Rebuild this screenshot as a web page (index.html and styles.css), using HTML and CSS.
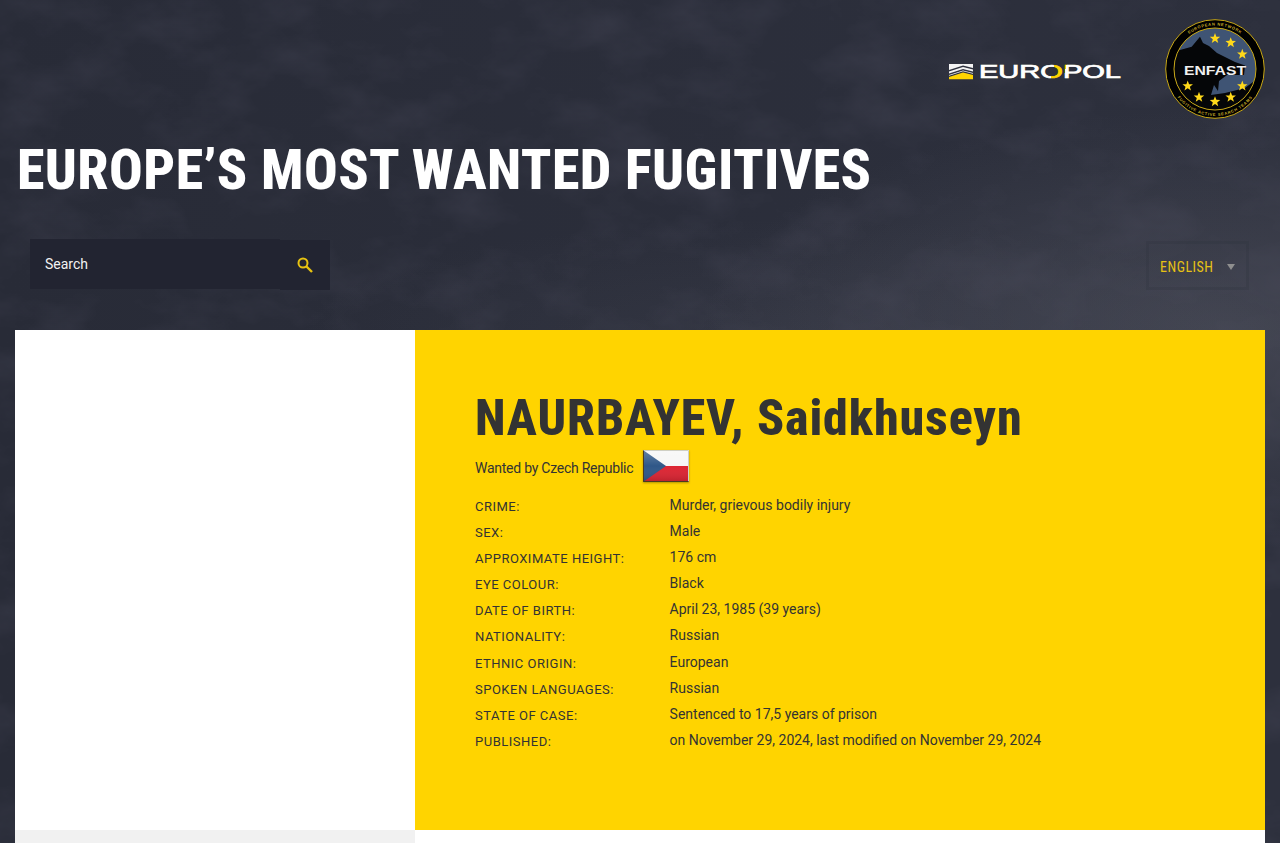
FILE: index.html
```html
<!DOCTYPE html>
<html>
<head>
  <title>Europe's Most Wanted Fugitives</title>
  <link rel="stylesheet" href="styles.css">
</head>
<body>
  <svg class="bg-texture" width="1280" height="843">
    <filter id="grain">
      <feTurbulence type="fractalNoise" baseFrequency="0.012 0.02" numOctaves="5" seed="7"></feTurbulence>
      <feColorMatrix type="matrix" values="0 0 0 0 0.08  0 0 0 0 0.08  0 0 0 0 0.12  0.6 0 0 0 -0.26"></feColorMatrix>
    </filter>
    <rect width="1280" height="843" filter="url(#grain)"></rect>
  </svg>

  <header class="site-header">
    <div class="logos">
      <svg class="europol-logo" viewBox="0 0 174 18" width="174" height="18">
        <defs>
          <linearGradient id="oFill" gradientUnits="userSpaceOnUse" x1="31" y1="-20" x2="174" y2="20">
            <stop offset="0.53" stop-color="#fff"></stop>
            <stop offset="0.53" stop-color="#ffd400"></stop>
            <stop offset="0.61" stop-color="#ffd400"></stop>
            <stop offset="0.61" stop-color="#fff"></stop>
          </linearGradient>
        </defs>
        <path d="M1 2 H25 V6 L15 3.500 L1 8Z M1 9.500 L15 5 L25 7.500 V9.500 L15 7 L1 11.500Z M1 13 L15 8.500 L25 11 V11.800 L15 9.300 L1 13.800Z" fill="#f4f4f4"></path>
        <path d="M1 15 L15 10.500 L25 13 V17.300 H1Z" fill="#ffd400"></path>
        <text class="europol-word" x="31" y="16.300" textLength="142" lengthAdjust="spacingAndGlyphs" fill="url(#oFill)" stroke="url(#oFill)" stroke-width="0.7">EUROPOL</text>
      </svg>
      <svg class="enfast-logo" viewBox="0 0 100 100" width="100" height="100">
        <defs>
          <path id="arcTop" d="M6.500 50 A43.500 43.500 0 0 1 93.500 50"></path>
          <path id="arcBottom" d="M3 50 A47 47 0 0 0 97 50"></path>
          <path id="star" d="M0 -5.500 L1.360 -1.860 L5.240 -1.700 L2.190 0.710 L3.240 4.460 L0 2.300 L-3.240 4.460 L-2.190 0.710 L-5.240 -1.700 L-1.360 -1.860Z"></path>
          <clipPath id="innerDisc"><circle cx="50" cy="50" r="41"></circle></clipPath>
        </defs>
        <circle cx="50" cy="50" r="49.300" fill="#000" stroke="#c9a816" stroke-width="1"></circle>
        <circle cx="50" cy="50" r="41" fill="#3f5474"></circle>
        <path clip-path="url(#innerDisc)" d="M35 17.700 L38 24 L44 27 L52 34 L70 43 L80 46.500 L79 56 L62 56 L54 62 L53 72 L49 66 L46 76 L60 74 L80 69 L92 60 V100 H8 V30 L15 31 L26.700 27.700Z" fill="#050608"></path>
        <circle cx="50" cy="50" r="41" fill="none" stroke="#c9a816" stroke-width="1"></circle>
        <text class="enfast-word" x="50" y="56" textLength="62" lengthAdjust="spacingAndGlyphs">ENFAST</text>
        <text class="enfast-ring"><textPath href="#arcTop" startOffset="50%">EUROPEAN NETWORK</textPath></text>
        <text class="enfast-ring"><textPath href="#arcBottom" startOffset="50%">FUGITIVE ACTIVE SEARCH TEAMS</textPath></text>
        <g fill="#ffd91a">
          <use href="#star" x="50" y="19.500"></use>
          <use href="#star" x="65.700" y="23.700"></use>
          <use href="#star" x="77.300" y="35.300"></use>
          <use href="#star" x="77.300" y="67"></use>
          <use href="#star" x="65.700" y="78.300"></use>
          <use href="#star" x="50" y="82.700"></use>
          <use href="#star" x="34" y="78.300"></use>
          <use href="#star" x="22.700" y="67"></use>
        </g>
      </svg>
    </div>
    <h1 class="site-title">EUROPE’S MOST WANTED FUGITIVES</h1>
    <div class="toolbar">
      <form class="search-form">
        <div class="search-input">Search</div>
        <button class="search-button" type="button">
          <svg viewBox="0 0 16 16" width="16" height="16">
            <circle cx="6" cy="6" r="4.500" fill="none" stroke="#e8c311" stroke-width="2"></circle>
            <path d="M9.500 9.500 L15 15" stroke="#e8c311" stroke-width="2.400" fill="none"></path>
          </svg>
        </button>
      </form>
      <div class="language-select">
        <span>ENGLISH</span>
        <i class="select-arrow"></i>
      </div>
    </div>
  </header>

  <main class="fugitive">
    <div class="photo-column">
      <div class="photo"></div>
      <div class="photo-footer"></div>
    </div>
    <div class="info-column">
      <section class="info-card">
        <h2 class="fugitive-name">NAURBAYEV, Saidkhuseyn</h2>
        <div class="wanted-by">
          <span>Wanted by Czech Republic</span>
          <svg class="flag" viewBox="0 0 46 32" width="46" height="32">
            <defs>
              <linearGradient id="gloss" x1="0" y1="0" x2="0" y2="1">
                <stop offset="0" stop-color="#fff" stop-opacity="0.25"></stop>
                <stop offset="0.5" stop-color="#fff" stop-opacity="0"></stop>
                <stop offset="1" stop-color="#000" stop-opacity="0.15"></stop>
              </linearGradient>
            </defs>
            <rect width="46" height="16" fill="#f6f6f6"></rect>
            <rect y="16" width="46" height="16" fill="#dc2432"></rect>
            <path d="M0 0 L23 16 L0 32Z" fill="#2f5788"></path>
            <rect width="46" height="32" fill="url(#gloss)"></rect>
            <path d="M0.500 0.500 H45.500 V31.500" fill="none" stroke="#cfcfc4" stroke-width="1"></path>
            <path d="M0.500 0.500 V31.500 H45.500" fill="none" stroke="#4a3a20" stroke-width="1"></path>
          </svg>
        </div>
        <dl class="details">
          <div class="detail-row"><dt>Crime:</dt><dd>Murder, grievous bodily injury</dd></div>
          <div class="detail-row"><dt>Sex:</dt><dd>Male</dd></div>
          <div class="detail-row"><dt>Approximate height:</dt><dd>176 cm</dd></div>
          <div class="detail-row"><dt>Eye colour:</dt><dd>Black</dd></div>
          <div class="detail-row"><dt>Date of birth:</dt><dd>April 23, 1985 (39 years)</dd></div>
          <div class="detail-row"><dt>Nationality:</dt><dd>Russian</dd></div>
          <div class="detail-row"><dt>Ethnic origin:</dt><dd>European</dd></div>
          <div class="detail-row"><dt>Spoken languages:</dt><dd>Russian</dd></div>
          <div class="detail-row"><dt>State of case:</dt><dd>Sentenced to 17,5 years of prison</dd></div>
          <div class="detail-row"><dt>Published:</dt><dd>on November 29, 2024, last modified on November 29, 2024</dd></div>
        </dl>
      </section>
      <div class="info-footer"></div>
    </div>
  </main>
</body>
</html>
```

FILE: styles.css
```css
html, body {
  height: 100%;
}

body {
  margin: 0;
  padding: 0;
  overflow: hidden;
  font-family: Roboto, Arial, sans-serif;
  color: #333;
  background-color: #282b37;
  background-image:
    radial-gradient(ellipse 520px 220px at 1220px 330px, rgba(88, 90, 102, 0.5), rgba(88, 90, 102, 0) 100%),
    radial-gradient(ellipse 500px 110px at 800px 330px, rgba(80, 82, 94, 0.22), rgba(80, 82, 94, 0) 100%),
    linear-gradient(90deg, #282b37 0%, #2d303d 100%);
}

.bg-texture {
  position: absolute;
  top: 0;
  left: 0;
  z-index: -1;
}

.site-header {
  height: 330px;
  display: flex;
  flex-direction: column;
}

.logos {
  height: 140px;
  padding-top: 19px;
  padding-right: 15px;
  box-sizing: border-box;
  display: flex;
  justify-content: flex-end;
  align-items: flex-start;
  flex-shrink: 0;
}

.europol-logo {
  margin-top: 43px;
  margin-right: 43px;
  overflow: visible;
}

.europol-word {
  font-family: "Liberation Sans", Arial, sans-serif;
  font-size: 17.500px;
}

.enfast-word {
  font-family: "Liberation Sans", Arial, sans-serif;
  font-size: 12.500px;
  font-weight: bold;
  fill: #f0f0f0;
  text-anchor: middle;
}

.enfast-ring {
  font-family: "Liberation Sans", Arial, sans-serif;
  font-size: 4px;
  font-weight: bold;
  letter-spacing: 0.7px;
  fill: #c9ad2a;
  text-anchor: middle;
}

.site-title {
  margin: 0;
  padding-left: 17px;
  font-family: "Roboto Condensed", Roboto, sans-serif;
  font-stretch: condensed;
  font-size: 56px;
  line-height: 60px;
  font-weight: 800;
  letter-spacing: 0.4px;
  color: #fff;
  white-space: nowrap;
}

.toolbar {
  margin-top: 40px;
  padding: 0 31px 0 30px;
  display: flex;
  justify-content: space-between;
  align-items: flex-start;
}

.search-form {
  display: flex;
  margin: 0;
}

.search-input {
  width: 235px;
  height: 50px;
  margin-top: -1px;
  padding-left: 15px;
  font-size: 14px;
  line-height: 50px;
  color: #f2f2f2;
  background-color: #222431;
}

.search-button {
  width: 50px;
  height: 50px;
  padding: 0;
  border: none;
  background-color: #222431;
  display: flex;
  align-items: center;
  justify-content: center;
  cursor: pointer;
}

.language-select {
  width: 103px;
  height: 49px;
  margin-top: 1px;
  box-sizing: border-box;
  padding: 2px 11px 0 11px;
  border: 3px solid rgba(40, 42, 54, 0.18);
  display: flex;
  align-items: center;
  justify-content: space-between;
  font-family: "Roboto Condensed", Roboto, sans-serif;
  font-stretch: condensed;
  font-size: 14px;
  letter-spacing: 0.5px;
  color: #e6c214;
}

.select-arrow {
  width: 0;
  height: 0;
  border-left: 4px solid transparent;
  border-right: 4px solid transparent;
  border-top: 6px solid #8f8f8f;
}

.fugitive {
  margin: 0 15px;
  display: flex;
}

.photo-column {
  width: 400px;
  flex-shrink: 0;
}

.photo {
  height: 500px;
  background-color: #fff;
}

.photo-footer {
  height: 13px;
  background-color: #f1f1f1;
}

.info-column {
  flex-grow: 1;
}

.info-card {
  height: 500px;
  box-sizing: border-box;
  padding: 59px 60px 0;
  background-color: #ffd400;
}

.info-footer {
  height: 13px;
  background-color: #fff;
}

.fugitive-name {
  margin: 0;
  font-family: "Roboto Condensed", Roboto, sans-serif;
  font-stretch: condensed;
  font-size: 50px;
  line-height: 58px;
  font-weight: 800;
  letter-spacing: 0.9px;
  color: #333;
  white-space: nowrap;
}

.wanted-by {
  height: 46px;
  margin-top: 3px;
  display: flex;
  align-items: flex-start;
  font-size: 14px;
  letter-spacing: -0.25px;
}

.wanted-by span {
  margin-top: 10px;
}

.flag {
  margin-left: 10px;
  box-shadow: 0 1px 2px rgba(0, 0, 0, 0.3);
}

.details {
  margin: 0;
}

.detail-row {
  height: 26.100px;
  display: flex;
}

.detail-row dt {
  width: 194.600px;
  flex-shrink: 0;
  padding-top: 2px;
  font-size: 13px;
  line-height: 18px;
  letter-spacing: 0.5px;
  text-transform: uppercase;
}

.detail-row dd {
  margin: 0;
  font-size: 14px;
  line-height: 18px;
  white-space: nowrap;
}
```
